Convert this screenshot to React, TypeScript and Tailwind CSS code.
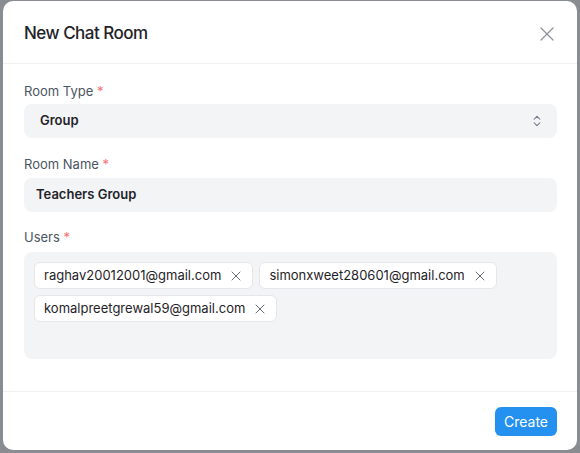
import { X, ChevronsUpDown } from "lucide-react";

const users = [
  "raghav20012001@gmail.com",
  "simonxweet280601@gmail.com",
  "komalpreetgrewal59@gmail.com",
];

function Label({ children }: { children: string }) {
  return (
    <div className="text-[13px] leading-[18px] text-[#4b5563]">
      {children} <span className="text-[#f87171]">*</span>
    </div>
  );
}

export default function App() {
  return (
    <div
      className="h-[453px] w-[580px] overflow-hidden bg-[#898c90] pt-[1px]"
      style={{ fontFamily: "Inter, 'Noto Sans', sans-serif" }}
    >
      <div className="ml-[3px] flex h-[449px] w-[574px] flex-col rounded-[10px] bg-white">
        <div className="flex h-[63px] items-center justify-between border-b border-[#f0f0f1] pl-[21px] pr-[18px] pt-[3px]">
          <h2 className="text-[17px] font-medium tracking-[-0.03em] text-[#1f2328]">New Chat Room</h2>
          <X className="h-[24px] w-[24px] text-[#8b9097]" strokeWidth={1.2} />
        </div>
        <div className="flex flex-1 flex-col pl-[21px] pr-[20px] pt-[18px]">
          <Label>Room Type</Label>
          <div className="mt-[4px] flex h-[34px] items-center justify-between rounded-lg bg-[#f3f4f6] pl-4 pr-[13px]">
            <span className="text-[13px] font-semibold text-[#1f2328]">Group</span>
            <ChevronsUpDown className="h-[14px] w-[14px] text-[#6b7280]" strokeWidth={1.8} />
          </div>
          <div className="mt-[17px]">
            <Label>Room Name</Label>
          </div>
          <div className="mt-[5px] flex h-[34px] items-center rounded-lg bg-[#f3f4f6] px-3">
            <span className="text-[13px] font-semibold text-[#1f2328]">Teachers Group</span>
          </div>
          <div className="mt-[16px]">
            <Label>Users</Label>
          </div>
          <div className="mt-[6px] h-[107px] rounded-lg bg-[#f3f4f6] p-[10px] pl-[10px]">
            <div className="flex flex-wrap gap-[6px]">
              {users.map((u) => (
                <div
                  key={u}
                  className="flex h-[27px] items-center gap-[7px] rounded-md border border-[#e5e7eb] bg-white pl-[9px] pr-[8px] text-[13px] text-[#1f2328]"
                >
                  <span>{u}</span>
                  <X className="h-[16px] w-[16px] text-[#4b5563]" strokeWidth={1.3} />
                </div>
              ))}
            </div>
          </div>
        </div>
        <div className="flex h-[59px] items-center justify-end border-t border-[#f0f0f1] pr-[20px]">
          <button className="h-[29px] rounded-md bg-[#2490ef] px-[9px] text-[14px] text-white">
            Create
          </button>
        </div>
      </div>
    </div>
  );
}
